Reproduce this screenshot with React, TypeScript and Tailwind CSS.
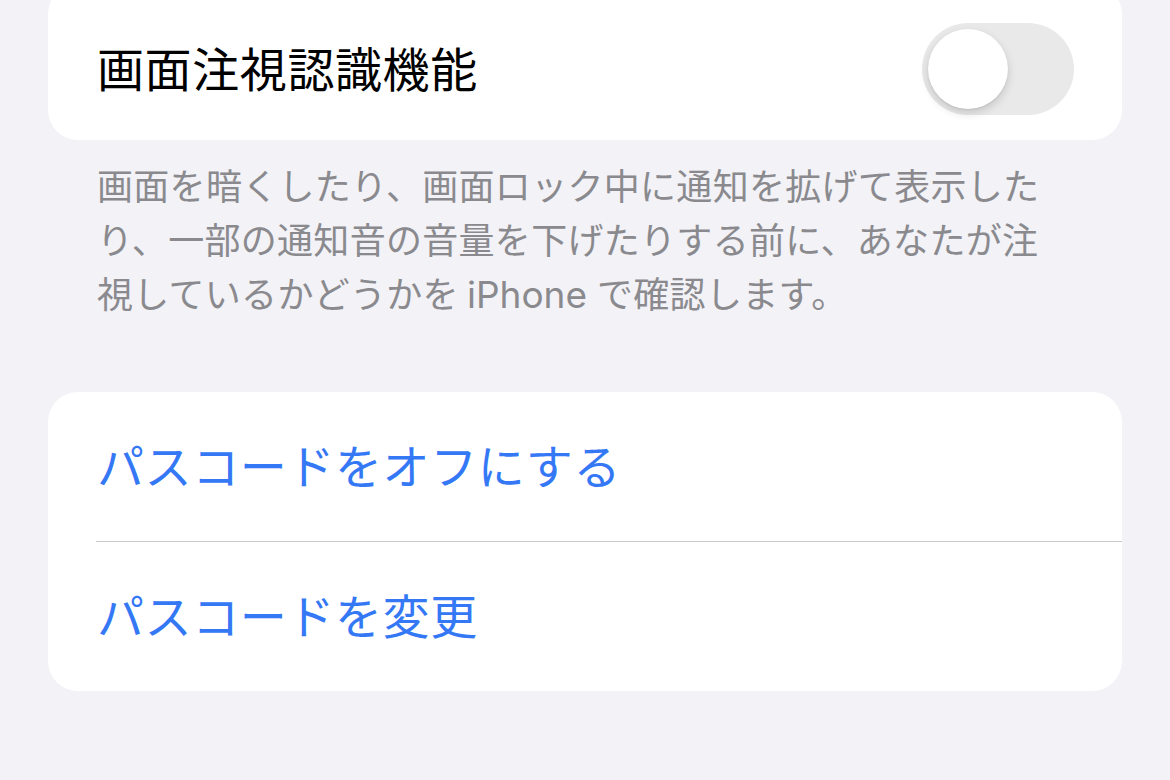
export default function App() {
  const font = { fontFamily: 'Inter, "Noto Sans CJK JP", sans-serif' };

  return (
    <div className="w-[1170px] h-[780px] overflow-hidden bg-[#f2f2f7]" style={font}>
      <div className="px-[48px]">
        {/* 画面注視認識機能 card */}
        <div className="mt-[-16px] h-[156px] rounded-[30px] bg-white flex items-center justify-between pt-[14px] pl-[49px] pr-[48px]">
          <span className="text-[47px] leading-none text-black tracking-[0.6px]">画面注視認識機能</span>
          <div className="w-[152px] h-[92px] rounded-full bg-[#e9e9ea] p-[6px] flex items-center">
            <div className="w-[80px] h-[80px] rounded-full bg-white shadow-[0_4px_10px_rgba(0,0,0,0.15),0_1px_2px_rgba(0,0,0,0.08)]" />
          </div>
        </div>

        <div className="mt-[20px] pl-[49px] text-[36px] leading-[54px] tracking-[0.3px] text-[#8a8a8e]">
          <div>画面を暗くしたり、画面ロック中に通知を拡げて表示した</div>
          <div>り、一部の通知音の音量を下げたりする前に、あなたが注</div>
          <div>
            視しているかどうかを<span className="ml-[8px] mr-[10px] text-[37px] tracking-[0px]">iPhone</span>で確認します。
          </div>
        </div>

        {/* passcode card */}
        <div className="mt-[70px] rounded-[30px] bg-white">
          <div className="h-[149px] flex items-center pl-[49px]">
            <span className="text-[47px] leading-none tracking-[0.6px] text-[#3478f6]">パスコードをオフにする</span>
          </div>
          <div className="ml-[48px] h-px bg-[#c8c8cc]" />
          <div className="h-[149px] flex items-center pl-[49px]">
            <span className="text-[47px] leading-none tracking-[0.6px] text-[#3478f6]">パスコードを変更</span>
          </div>
        </div>
      </div>
    </div>
  );
}
